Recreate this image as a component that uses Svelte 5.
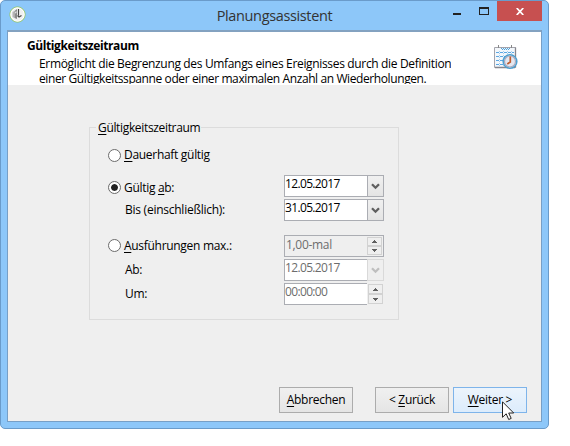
<script>
  let choice = $state('from');
  let validFrom = $state('12.05.2017');
  let validTo = $state('31.05.2017');
</script>

{#snippet radio(value)}
  <button class="radio" class:checked={choice === value} aria-label={value} onclick={() => (choice = value)}></button>
{/snippet}

{#snippet dateBox(value, disabled)}
  <div class="field" class:disabled>
    <span class="value date">{value}</span>
    <span class="drop">
      <svg width="9" height="7" viewBox="0 0 9 7"><path d="M1 1.2 4.5 4.7 8 1.2" fill="none" stroke="currentColor" stroke-width="2.3" /></svg>
    </span>
  </div>
{/snippet}

{#snippet spinner()}
  <span class="spin">
    <i><svg width="5" height="3" viewBox="0 0 5 3"><path d="M2 0H3V1H4V2H5V3H0V2H1V1H2Z" /></svg></i>
    <i><svg width="5" height="3" viewBox="0 0 5 3"><path d="M0 0H5V1H4V2H3V3H2V2H1V1H0Z" /></svg></i>
  </span>
{/snippet}

<div class="window">
  <div class="titlebar">
    <svg class="app" width="17" height="17" viewBox="0 0 17 17">
      <circle cx="8.5" cy="8.5" r="7.6" fill="#f1f1f1" stroke="#94c65d" />
      <circle cx="8.5" cy="8.5" r="6.7" fill="none" stroke="#fff" />
      <path d="M3.500 6 5.500 5V12L3.500 11Z" fill="#b5b5b5" />
      <path d="M5.500 5 8 3V13L5.500 12Z" fill="#8b8b8b" />
      <path d="M6 6 7.500 5V7L6 7.500Z" fill="#ddd" />
      <path d="M9.500 3V9.500M8.500 9.500 10 11 12.500 9.500" fill="none" stroke="#444" stroke-width="1.2" />
    </svg>
    <span class="title">Planungsassistent</span>
    <div class="controls">
      <svg class="min" width="8" height="2"><rect width="8" height="2" fill="#222" /></svg>
      <svg class="max" width="10" height="8"><path d="M0 0H10V8H0ZM1 2V7H9V2Z" fill="#222" fill-rule="evenodd" /></svg>
      <button class="close" aria-label="Schließen">
        <svg width="8" height="7" viewBox="0 0 8 7"><path d="M.7 0 7.3 7M7.3 0 .7 7" stroke="#fff" stroke-width="1.7" /></svg>
      </button>
    </div>
  </div>

  <div class="client">
    <header>
      <div class="intro">
        <strong>Gültigkeitszeitraum</strong>
        <p>
          <span class="l1">Ermöglicht die Begrenzung des Umfangs eines Ereignisses durch die Definition</span>
          <span class="l2">einer Gültigkeitsspanne oder einer maximalen Anzahl an Wiederholungen.</span>
        </p>
      </div>
      <svg class="calendar" width="24" height="25" viewBox="0 0 24 25">
        <path d="M.5 2.500H21.500V22.500H.5Z" fill="#f3f7fb" stroke="#a4a4ac" />
        <path d="M21.500 2.500V22.500M1 22.500H21" stroke="#85858d" stroke-width="1.3" />
        <path d="M4.500 0V3M17.500 0V3" stroke="#888" />
        <path d="M7 3.500H16M8 4.500H15" stroke="#4fa3dc" stroke-dasharray="1 1" />
        <path d="M2 7.500H20M2 11.500H20M2 15.500H12M2 19.500H10" stroke="#5aa7e3" stroke-dasharray="3 1" />
        <path d="M5.500 6V21M9.500 6V21M13.500 6V10M17.500 6V9" stroke="#a9d0ef" stroke-dasharray="1 1" />
        <circle cx="16" cy="16.500" r="6.800" fill="#e3e7f0" stroke="#4b9fd0" stroke-width="1.600" />
        <circle cx="16" cy="16.500" r="5.500" fill="none" stroke="#aaa9bc" stroke-width="1.2" />
        <path d="M16.300 11.500V17L13.300 19" fill="none" stroke="#c05a2c" stroke-width="1.700" />
      </svg>
    </header>

    <section class="group">
      <span class="legend"><u>G</u>ültigkeitszeitraum</span>
      <div class="row first">{@render radio('always')}<span class="label"><u>D</u>auerhaft gültig</span></div>
      <div class="row">
        <div class="option">{@render radio('from')}<span class="label from">Gültig <u>a</u>b:</span></div>
        {@render dateBox(validFrom, false)}
      </div>
      <div class="row"><span class="label sub until">Bis (einschließlich):</span>{@render dateBox(validTo, false)}</div>
      <div class="row third">
        <div class="option max-runs">{@render radio('count')}<span class="label count"><u>A</u>usführungen max.:</span></div>
        <div class="field disabled grey"><span class="value times">1,00-mal</span>{@render spinner()}</div>
      </div>
      <div class="row"><span class="label sub">Ab:</span>{@render dateBox(validFrom, true)}</div>
      <div class="row">
        <span class="label sub">Um:</span>
        <div class="field disabled time"><span class="value clock">00:00:00</span>{@render spinner()}</div>
      </div>
    </section>

    <footer>
      <button class="btn cancel"><span><u>A</u>bbrechen</span></button>
      <button class="btn"><span>&lt; <u>Z</u>urück</span></button>
      <button class="btn hot"><span><u>W</u>eiter &gt;</span></button>
    </footer>
  </div>
  <svg class="cursor" width="13" height="20" viewBox="0 0 13 20">
    <path d="M.5.8V16.300L4.200 12.800 6.700 18.500 9.200 17.400 6.700 12H11.700Z" fill="#fff" stroke="#222" />
  </svg>
</div>

<style>
  :global(body) { background: #fff; }
  .window {
    position: relative;
    box-sizing: border-box;
    width: 549px;
    height: 429px;
    background: #8dc7f9;
    border: 1px solid #6a9bca;
    border-radius: 5px;
    overflow: hidden;
    font: 12px/15px 'Open Sans', 'Noto Sans', sans-serif;
    color: #000;
    letter-spacing: -0.3px;
  }
  .titlebar { display: flex; height: 29px; position: relative; }
  .app { margin: 5px 0 0 8px; }
  .title {
    position: absolute;
    left: 0;
    width: 547px;
    top: 5px;
    text-align: center;
    font-size: 14.5px;
    line-height: 20px;
    color: #333;
    letter-spacing: -0.36px;
  }
  .controls { display: flex; margin-left: auto; margin-right: 6px; position: relative; }
  .min { margin: 12px 18px 0 0; }
  .max { margin: 6px 8px 0 0; }
  .close {
    width: 45px;
    height: 20px;
    border: 0;
    padding: 0;
    background: #c75050;
    display: flex;
    align-items: center;
    justify-content: center;
  }
  .client {
    box-sizing: border-box;
    display: flex;
    flex-direction: column;
    margin: 0 6px;
    height: 392px;
    background: #efefef;
    border: 1px solid #779fc6;
    border-top: 2px solid #83a2c0;
  }
  header {
    display: flex;
    justify-content: space-between;
    background: #fff;
    height: 53px;
    flex: none;
  }
  .intro { height: 52px; overflow: hidden; padding: 7px 0 0 19px; box-sizing: border-box; white-space: nowrap; }
  strong { display: block; line-height: 14px; letter-spacing: -0.4px; }
  p { margin: 3px 0 0 12px; display: flex; flex-direction: column; }
  .l1 { letter-spacing: -0.34px; }
  .l2 { letter-spacing: -0.4px; }
  .calendar { margin: 13px 23px 0 0; }
  .group {
    position: relative;
    box-sizing: border-box;
    width: 310px;
    height: 193px;
    margin: 42px 0 0 81px;
    padding: 16px 14px 0 18px;
    border: 1px solid #dcdcdc;
    display: flex;
    flex-direction: column;
    gap: 2px;
  }
  .legend { position: absolute; left: 6px; top: -8px; padding: 0 1px 0 2px; background: #efefef; white-space: nowrap; letter-spacing: -0.34px; }
  u { text-decoration: underline; text-decoration-thickness: 1px; text-underline-offset: 2px; }
  .row { display: flex; align-items: center; height: 22px; }
  .first { margin-bottom: 7px; }
  .first .label, .sub, .count { padding-bottom: 1px; }
  .third { margin-top: 12px; }
  .option { display: flex; align-items: center; padding-top: 2px; }
  .max-runs { padding-top: 0; padding-bottom: 1px; }
  .radio {
    width: 13px;
    height: 13px;
    padding: 2px;
    border: 1px solid #6b6b6b;
    border-radius: 50%;
    background: #fff;
    margin: 0 3px 0 0;
    flex: none;
  }
  .checked { background: #222 content-box; box-shadow: inset 0 0 0 2px #fff; }
  .label { white-space: nowrap; }
  .until { letter-spacing: -0.25px; }
  .sub { margin-left: 17px; }
  .field {
    box-sizing: border-box;
    display: flex;
    width: 100px;
    height: 22px;
    margin-left: auto;
    border: 1px solid #abadb3;
    background: #fff;
  }
  .value { flex: 1; line-height: 15px; white-space: nowrap; }
  .date { letter-spacing: -0.65px; }
  .clock { letter-spacing: -0.65px; }
  .drop {
    width: 15px;
    border-left: 1px solid #abadb3;
    background: linear-gradient(#f0f0f0, #e4e4e4);
    color: #606060;
    display: flex;
    align-items: center;
    justify-content: center;
  }
  .disabled { color: #6d6d6d; }
  .disabled .drop { background: #efefef; color: #bfbfbf; border: 1px solid #d9d9d9; margin: -1px; }
  .grey { background: #efefef; }
  .grey .value { padding-left: 1px; line-height: 18px; }
  .spin { width: 15px; display: flex; flex-direction: column; margin: 1px; }
  .spin i {
    box-sizing: border-box;
    height: 9px;
    flex: 1;
    border: 1px solid #d2d2d2;
    display: flex;
    align-items: center;
    justify-content: center;
    fill: #606060;
  }
  .time { border-right: 0; }
  .time .spin { background: #efefef; margin: -1px 0; padding: 1px; width: 15px; }
  footer { display: flex; justify-content: flex-end; margin: auto 14px 8px 0; }
  .btn {
    box-sizing: border-box;
    width: 74px;
    height: 26px;
    margin-left: 4px;
    padding: 0 0 1px;
    border: 1px solid #acacac;
    background: linear-gradient(#f0f0f0, #e5e5e5);
    font: inherit;
    color: #000;
    letter-spacing: inherit;
  }
  .cancel { margin-right: 18px; }
  .hot { border-color: #7eb4ea; background: linear-gradient(#ecf4fc, #dcecfc); }
  .cursor { position: absolute; left: 501px; top: 400px; }
</style>
